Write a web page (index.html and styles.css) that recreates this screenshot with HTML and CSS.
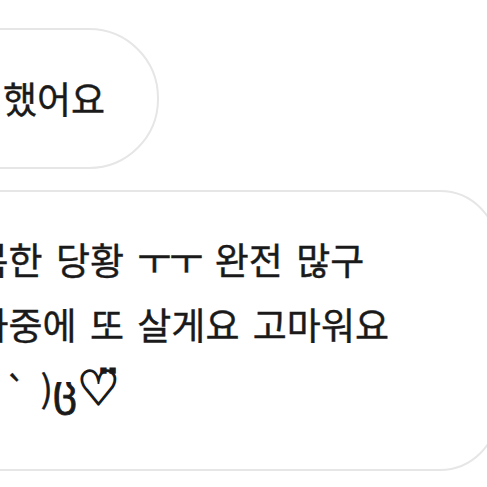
FILE: index.html
```html
<!DOCTYPE html>
<html lang="ko">
<head>
<meta charset="utf-8">
<link rel="stylesheet" href="styles.css">
</head>
<body>
<div class="chat">
  <div class="bubble bubble-short">
    <span class="msg">확인 했어요</span>
  </div>
  <div class="bubble bubble-long">
    <p class="msg">넘 행복한 당황 <span class="jamo">ㅜㅜ</span> 완전 많구<br>그럼 나중에 또 살게요 고마워요<br><span class="kao">(っ˘ ´` )</span><span class="ts">ც</span><span class="heart">♡̈</span></p>
  </div>
</div>
</body>
</html>
```

FILE: styles.css
```css
html, body {
  margin: 0;
  padding: 0;
  background: #ffffff;
  overflow: hidden;
}

.chat {
  width: 487px;
  height: 487px;
  overflow: hidden;
  display: flex;
  flex-direction: column;
  align-items: flex-start;
  padding-top: 28px;
  box-sizing: border-box;
  font-family: "Noto Sans CJK KR", "Noto Sans", "DejaVu Sans", sans-serif;
  color: #1a1a1a;
}

.bubble {
  box-sizing: border-box;
  border: 2px solid #e6e6e6;
  background: #ffffff;
  margin-left: -200px;
  flex-shrink: 0;
}

.bubble-short {
  width: 359px;
  height: 141px;
  border-radius: 70px;
  display: flex;
  align-items: center;
  justify-content: flex-end;
  padding-right: 52px;
}

.bubble-long {
  width: 698px;
  height: 281px;
  margin-top: 21px;
  border-radius: 58px;
  padding: 35px 0 0 91px;
}

.msg {
  margin: 0;
  font-size: 37px;
  font-weight: 400;
  line-height: 65px;
  word-spacing: 3px;
  white-space: nowrap;
  -webkit-text-stroke: 0.4px #1a1a1a;
}

.jamo {
  letter-spacing: -2px;
}

.kao {
  padding-left: 12px;
}

.ts {
  font-family: "DejaVu Sans", sans-serif;
  font-size: 42px;
  -webkit-text-stroke: 0.8px #1a1a1a;
}

.heart {
  font-family: "DejaVu Sans", sans-serif;
  font-size: 48px;
  line-height: 1;
  -webkit-text-stroke: 1.6px #1a1a1a;
}
```
